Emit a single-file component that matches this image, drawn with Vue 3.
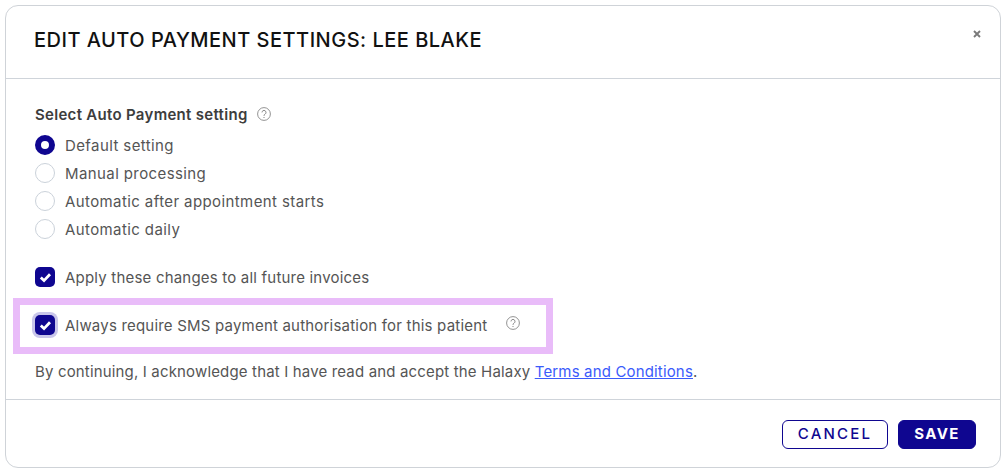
<script setup>
const opties = [
  { label: 'Default setting', valt: true },
  { label: 'Manual processing', valt: false },
  { label: 'Automatic after appointment starts', valt: false },
  { label: 'Automatic daily', valt: false }
]
</script>

<template>
  <div class="pagina">
    <div class="modal">
      <header class="kop">
        <h1>EDIT AUTO PAYMENT SETTINGS: LEE BLAKE</h1>
        <span class="sluit">
          <svg width="8" height="8" viewBox="0 0 8 8"><path d="M1 1l6 6M7 1L1 7" stroke="#7a7a7a" stroke-width="1.9" fill="none" /></svg>
        </span>
      </header>

      <section class="inhoud">
        <div class="rubrik">
          <span>Select Auto Payment setting</span>
          <svg class="hjalp" width="14" height="14" viewBox="0 0 14 14">
            <circle cx="7" cy="7" r="6.4" fill="none" stroke="#777" stroke-width="0.8" />
            <path d="M5 5.4a2 2 0 1 1 3.1 1.7c-.7.5-1.1.8-1.1 1.7" fill="none" stroke="#777" stroke-width="0.9" />
            <circle cx="7" cy="10.5" r="0.6" fill="#777" />
          </svg>
        </div>

        <div class="radios">
          <div v-for="o in opties" :key="o.label" class="rad radio-rad">
            <span class="radio" :class="{ vald: o.valt }"></span>
            <span>{{ o.label }}</span>
          </div>
        </div>

        <div class="rad kryss-rad">
          <span class="kryss">
            <svg width="13" height="11" viewBox="0 0 13 11"><path d="M1.8 5.6l3.2 3 6-6.4" fill="none" stroke="#fff" stroke-width="2.8" /></svg>
          </span>
          <span>Apply these changes to all future invoices</span>
        </div>

        <div class="rad sms-rad">
          <span class="kryss fokus">
            <svg width="13" height="11" viewBox="0 0 13 11"><path d="M1.8 5.6l3.2 3 6-6.4" fill="none" stroke="#fff" stroke-width="2.8" /></svg>
          </span>
          <span>Always require SMS payment authorisation for this patient</span>
          <svg class="hjalp sms-hjalp" width="14" height="14" viewBox="0 0 14 14">
            <circle cx="7" cy="7" r="6.4" fill="none" stroke="#777" stroke-width="0.8" />
            <path d="M5 5.4a2 2 0 1 1 3.1 1.7c-.7.5-1.1.8-1.1 1.7" fill="none" stroke="#777" stroke-width="0.9" />
            <circle cx="7" cy="10.5" r="0.6" fill="#777" />
          </svg>
          <div class="markering"></div>
        </div>

        <p class="villkor">By continuing, I acknowledge that I have read and accept the Halaxy <a href="#">Terms and Conditions</a>.</p>
      </section>

      <footer class="fot">
        <button class="avbryt">CANCEL</button>
        <button class="spara">SAVE</button>
      </footer>
    </div>
  </div>
</template>

<style scoped>
.pagina {
  padding: 5px;
  height: 473px;
  box-sizing: border-box;
  background: #fff;
  font-family: Inter, "Liberation Sans", sans-serif;
  color: #555;
  font-size: 15px;
}

.modal {
  width: 996px;
  height: 463px;
  box-sizing: border-box;
  border: 1px solid #cfd3d8;
  border-radius: 13px;
  display: flex;
  flex-direction: column;
}

.kop {
  height: 73px;
  box-sizing: border-box;
  border-bottom: 1px solid #cfd4da;
  padding: 21px 19px 0 28px;
  display: flex;
  justify-content: space-between;
}

h1 {
  margin: 0;
  font-size: 20px;
  line-height: 26px;
  font-weight: 500;
  letter-spacing: 0.49px;
  color: #111;
}

.sluit {
  display: flex;
  align-items: flex-start;
  padding-top: 3px;
}

.inhoud {
  flex: 1;
  padding: 25px 0 0 29px;
}

.rubrik {
  display: flex;
  align-items: center;
  gap: 9px;
  font-weight: 600;
  height: 20px;
  letter-spacing: 0.3px;
  color: #3d3d3d;
}

.radios {
  margin-top: 7px;
}

.rad {
  display: flex;
  align-items: center;
  height: 28px;
  letter-spacing: 0.2px;
}

.radio-rad {
  letter-spacing: 0.4px;
}

.radio {
  width: 18px;
  height: 18px;
  border: 1px solid #cbd2da;
  border-radius: 50%;
  margin-right: 10px;
  flex: none;
}

.radio.vald {
  width: 20px;
  height: 20px;
  box-sizing: border-box;
  border: 6px solid #0f0690;
  background: #fff;
}

.kryss {
  width: 20px;
  height: 20px;
  border-radius: 5px;
  background: #0f0690;
  margin-right: 10px;
  display: flex;
  align-items: center;
  justify-content: center;
  flex: none;
}

.kryss.fokus {
  box-shadow: 0 0 0 3px #c9c6ea;
}

.kryss-rad {
  margin-top: 20px;
}

.sms-rad {
  position: relative;
  margin-top: 20px;
}

.sms-hjalp {
  margin-left: 19px;
  margin-top: -4px;
}

/* Markeringsram ovanpå raden */
.markering {
  position: absolute;
  left: -22px;
  top: -13px;
  width: 540px;
  height: 56px;
  box-sizing: border-box;
  border: 7px solid #e9bcf9;
}

.villkor {
  margin: 23px 0 0;
  line-height: 20px;
  letter-spacing: 0.16px;
}

.villkor a {
  color: #3b5bfb;
}

.fot {
  height: 68px;
  box-sizing: border-box;
  border-top: 1px solid #cfd4da;
  padding: 20px 24px 0 0;
  display: flex;
  justify-content: flex-end;
  gap: 10px;
}

button {
  height: 29px;
  border-radius: 6px;
  font-family: inherit;
  font-size: 15px;
  box-sizing: border-box;
  padding: 0 0 2px;
}

.avbryt {
  width: 106px;
  background: #fff;
  border: 1px solid #0f0690;
  color: #0f0690;
  font-weight: 500;
  letter-spacing: 2.2px;
}

.spara {
  width: 78px;
  background: #0f0690;
  border: 1px solid #0f0690;
  color: #fff;
  font-weight: 700;
  letter-spacing: 1.4px;
}
</style>
